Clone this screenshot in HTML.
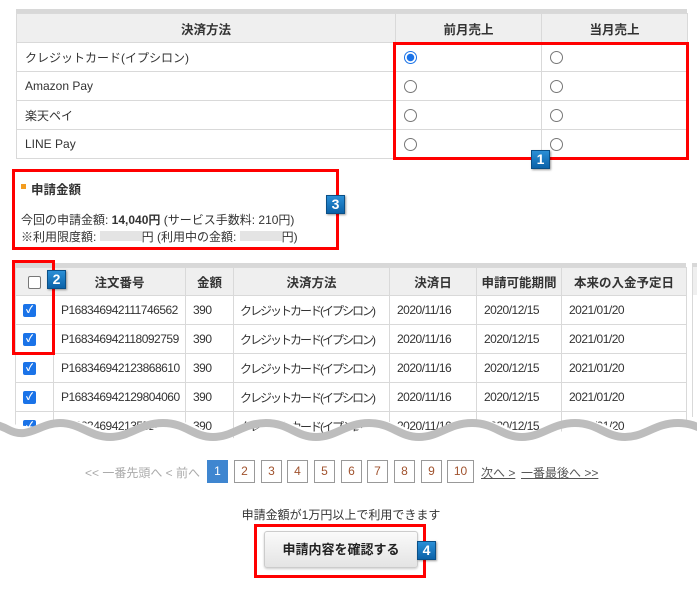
<!DOCTYPE html>
<html><head><meta charset="utf-8"><style>
*{margin:0;padding:0;box-sizing:border-box}
body{width:697px;height:590px;background:#fff;position:relative;overflow:hidden;font-family:"Liberation Sans","Noto Sans CJK JP",sans-serif;font-size:12px;color:#333}
.a{position:absolute}
table{border-collapse:collapse;position:absolute;table-layout:fixed}
td,th{border:1px solid #d9d9d9;height:29px;padding:0 8px;white-space:nowrap;overflow:hidden}
th{background:#efefef;font-weight:bold;color:#333;font-size:12.5px;text-align:center}
.t2 td{font-size:12px;padding:0 7px;letter-spacing:-0.5px}
.t2 th{height:28px;padding:0 3px}
.t2 td.jp{letter-spacing:-2px;padding:0 6px}
.red{position:absolute;border:3px solid #f00}
.bd{position:absolute;width:19px;height:19px;background:linear-gradient(#2b8fd6,#0b62a8);border:1px solid #0a4f86;color:#fff;font-weight:bold;font-size:14px;text-align:center;line-height:17px;box-shadow:1px 1px 2px rgba(0,0,0,.4)}
.rad{display:inline-block;width:13px;height:13px;border:1px solid #777;border-radius:50%;vertical-align:middle}
.rad.on{border:1px solid #1a73e8;background:radial-gradient(circle,#1a73e8 0 3.5px,#fff 4px)}
.cb{display:inline-block;width:13px;height:13px;background:#1a73e8;border-radius:2px;color:#fff;font-size:10px;line-height:13px;text-align:center;font-weight:bold;vertical-align:middle;letter-spacing:0}
.cb0{display:inline-block;width:13px;height:13px;border:1px solid #777;border-radius:2px;background:#fff;vertical-align:middle}
.pg{position:absolute;top:460px;width:21px;height:23px;border:1px solid #999;color:#a0522d;text-align:center;line-height:21px;font-size:12px}
</style></head><body>
<div class="a" style="left:16px;top:9px;width:671px;height:4px;background:#d8d8d8"></div>
<table style="left:16px;top:13px;width:671px">
<colgroup><col style="width:379px"><col style="width:146px"><col style="width:146px"></colgroup>
<tr><th>決済方法</th><th>前月売上</th><th>当月売上</th></tr>
<tr><td>クレジットカード(イプシロン)</td><td><span class="rad on"></span></td><td><span class="rad"></span></td></tr>
<tr><td>Amazon Pay</td><td><span class="rad"></span></td><td><span class="rad"></span></td></tr>
<tr><td>楽天ペイ</td><td><span class="rad"></span></td><td><span class="rad"></span></td></tr>
<tr><td>LINE Pay</td><td><span class="rad"></span></td><td><span class="rad"></span></td></tr>
</table>
<div class="red" style="left:393px;top:42px;width:296px;height:118px"></div>
<div class="bd" style="left:531px;top:150px">1</div>

<div class="red" style="left:12px;top:169px;width:327px;height:81px"></div>
<div class="a" style="left:21px;top:184px;width:5px;height:5px;background:#f39c1f"></div>
<div class="a" style="left:31px;top:179px;font-weight:bold;font-size:12.5px">申請金額</div>
<div class="a" style="left:21px;top:212px;line-height:17px">今回の申請金額: <b>14,040円</b> (サービス手数料: 210円)<br>※利用限度額: <span style="display:inline-block;width:42px;height:10px;background:#e4e4e4"></span>円 (利用中の金額: <span style="display:inline-block;width:42px;height:10px;background:#e4e4e4"></span>円)</div>
<div class="bd" style="left:326px;top:195px">3</div>

<div class="a" style="left:15px;top:263px;width:671px;height:4px;background:#d8d8d8"></div>
<div class="a" style="left:692px;top:263px;width:5px;height:4px;background:#d8d8d8"></div>
<div class="a" style="left:692px;top:267px;width:5px;height:150px;border-left:1px solid #d9d9d9;background:linear-gradient(#efefef 0 28px,#fff 28px)"></div>
<table class="t2" style="left:15px;top:267px;width:671px">
<colgroup><col style="width:38px"><col style="width:132px"><col style="width:48px"><col style="width:156px"><col style="width:87px"><col style="width:85px"><col style="width:125px"></colgroup>
<tr><th><span class="cb0"></span></th><th>注文番号</th><th>金額</th><th>決済方法</th><th>決済日</th><th>申請可能期間</th><th>本来の入金予定日</th></tr>
<tr><td><span class="cb">✓</span></td><td>P168346942111746562</td><td>390</td><td class="jp">クレジットカード(イプシロン)</td><td>2020/11/16</td><td>2020/12/15</td><td>2021/01/20</td></tr>
<tr><td><span class="cb">✓</span></td><td>P168346942118092759</td><td>390</td><td class="jp">クレジットカード(イプシロン)</td><td>2020/11/16</td><td>2020/12/15</td><td>2021/01/20</td></tr>
<tr><td><span class="cb">✓</span></td><td>P168346942123868610</td><td>390</td><td class="jp">クレジットカード(イプシロン)</td><td>2020/11/16</td><td>2020/12/15</td><td>2021/01/20</td></tr>
<tr><td><span class="cb">✓</span></td><td>P168346942129804060</td><td>390</td><td class="jp">クレジットカード(イプシロン)</td><td>2020/11/16</td><td>2020/12/15</td><td>2021/01/20</td></tr>
<tr><td><span class="cb">✓</span></td><td>P168346942135520000</td><td>390</td><td class="jp">クレジットカード(イプシロン)</td><td>2020/11/16</td><td>2020/12/15</td><td>2021/01/20</td></tr>
</table>
<svg class="a" style="left:0;top:400px" width="697" height="60" viewBox="0 400 697 60">
<path d="M-50,430 Q-23.5,416 9,423 Q34,430 60,423 Q85,416 110,437 Q135,444 163,423 Q188,416 213,437 Q238,444 266,423 Q291,416 316,437 Q341,444 369,423 Q394,416 419,437 Q444,444 472,423 Q497,416 522,437 Q547,444 575,423 Q600,416 625,437 Q650,444 678,423 Q703,416 730,437 L730,470 L-50,470Z" fill="#fff"/>
<path d="M-50,430 C-30,420 -10,420 9,430 S40,423 60,423 S90,437 110,437 S140,423 163,423 S193,437 213,437 S243,423 266,423 S296,437 316,437 S346,423 369,423 S399,437 419,437 S449,423 472,423 S502,437 522,437 S552,423 575,423 S605,437 625,437 S655,423 678,423 S708,437 730,437" fill="none" stroke="#bdbdbd" stroke-width="8"/>
</svg>
<div class="red" style="left:12px;top:260px;width:43px;height:95px"></div>
<div class="bd" style="left:47px;top:270px">2</div>

<div class="a" style="left:85px;top:464px;color:#aaa">&lt;&lt; 一番先頭へ &lt; 前へ</div>
<div class="pg" style="left:207px;background:#3f86d0;border-color:#3f86d0;color:#fff">1</div>
<div class="pg" style="left:234px">2</div>
<div class="pg" style="left:261px">3</div>
<div class="pg" style="left:287px">4</div>
<div class="pg" style="left:314px">5</div>
<div class="pg" style="left:341px">6</div>
<div class="pg" style="left:367px">7</div>
<div class="pg" style="left:394px">8</div>
<div class="pg" style="left:421px">9</div>
<div class="pg" style="left:447px;width:27px">10</div>
<div class="a" style="left:481px;top:464px;color:#555;text-decoration:underline">次へ &gt;</div>
<div class="a" style="left:521px;top:464px;color:#555;text-decoration:underline">一番最後へ &gt;&gt;</div>

<div class="a" style="left:0;width:682px;top:506px;text-align:center">申請金額が1万円以上で利用できます</div>
<div class="red" style="left:254px;top:524px;width:172px;height:54px"></div>
<div class="a" style="left:264px;top:531px;width:154px;height:37px;border:1px solid #ccc;border-radius:3px;background:linear-gradient(#fafafa,#e4e4e4);box-shadow:0 1px 2px rgba(0,0,0,.2);text-align:center;line-height:35px;font-weight:bold;font-size:13px;color:#222">申請内容を確認する</div>
<div class="bd" style="left:417px;top:541px">4</div>
</body></html>
